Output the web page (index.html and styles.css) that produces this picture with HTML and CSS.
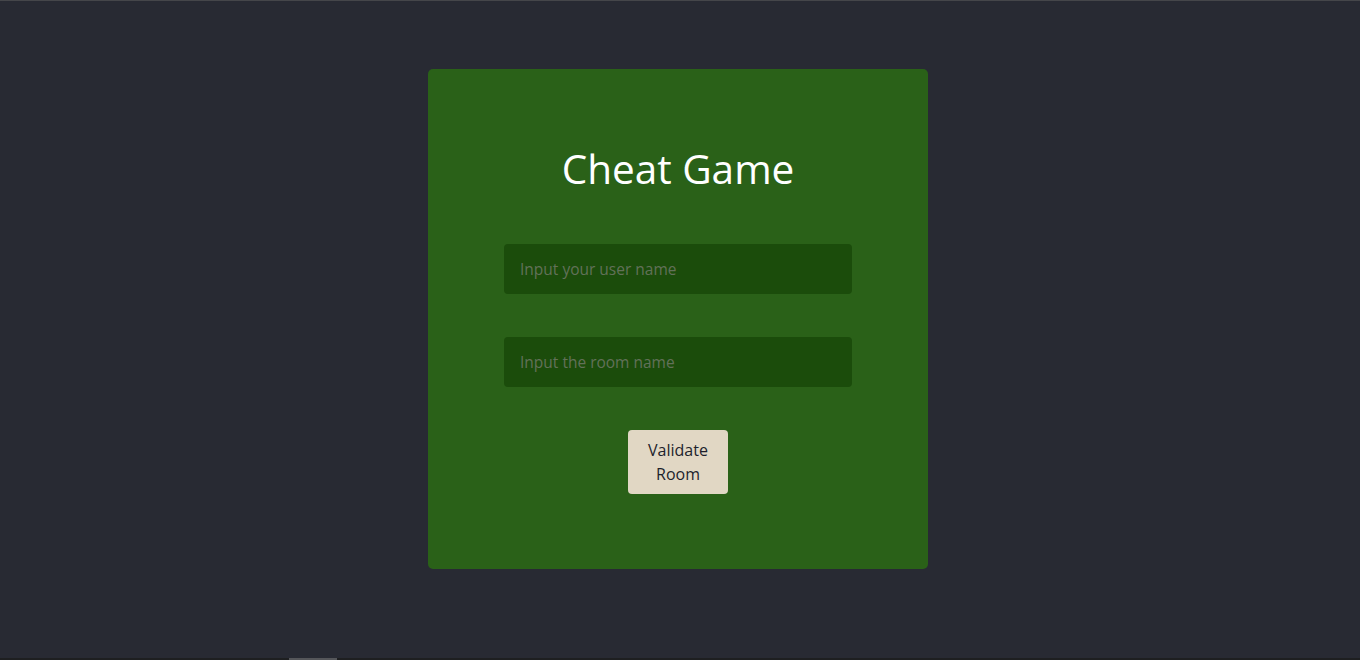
FILE: index.html
```html
<!DOCTYPE html>
<html lang="en">
<head>
<meta charset="utf-8">
<title>Cheat Game</title>
<link rel="stylesheet" href="styles.css">
</head>
<body>
<main class="page">
  <section class="card">
    <h1 class="title">Cheat Game</h1>
    <form class="form">
      <input class="field" type="text" placeholder="Input your user name">
      <input class="field" type="text" placeholder="Input the room name">
      <button class="btn" type="button">Validate<br>Room</button>
    </form>
  </section>
</main>
<div class="scrollbar"><div class="thumb"></div></div>
</body>
</html>
```
FILE: styles.css
```css
html, body {
  margin: 0;
  padding: 0;
  height: 100%;
  overflow: hidden;
}
body {
  background: #282a33;
  border-top: 1px solid #45464a;
  box-sizing: border-box;
  font-family: "Open Sans", "Lato", sans-serif;
}
.page {
  display: flex;
  justify-content: center;
  padding-top: 68px;
  padding-right: 4px;
}
.card {
  width: 500px;
  height: 500px;
  box-sizing: border-box;
  background: #2a6118;
  border-radius: 5px;
  display: flex;
  flex-direction: column;
  align-items: center;
  padding-top: 76px;
}
.title {
  margin: 0;
  color: #ffffff;
  font-size: 40.5px;
  font-weight: 400;
  line-height: 48px;
}
.form {
  display: flex;
  flex-direction: column;
  align-items: center;
  margin-top: 51px;
  gap: 43px;
}
.field {
  width: 348px;
  height: 50px;
  box-sizing: border-box;
  border: none;
  outline: none;
  border-radius: 4px;
  background: #1b4c0b;
  padding: 0 16px;
  font-family: inherit;
  font-size: 15.5px;
  color: #e0e0e0;
}
.field::placeholder {
  color: #627159;
}
.btn {
  width: 100px;
  height: 64px;
  border: none;
  border-radius: 4px;
  background: #e1d7c4;
  color: #1d1f2c;
  font-family: inherit;
  font-size: 16px;
  line-height: 24px;
  padding: 0;
}
.scrollbar {
  position: fixed;
  left: 0;
  right: 0;
  bottom: 0;
  height: 2px;
  background: #1e1f21;
}
.thumb {
  margin-left: 289px;
  width: 48px;
  height: 2px;
  background: #55565a;
}
```
